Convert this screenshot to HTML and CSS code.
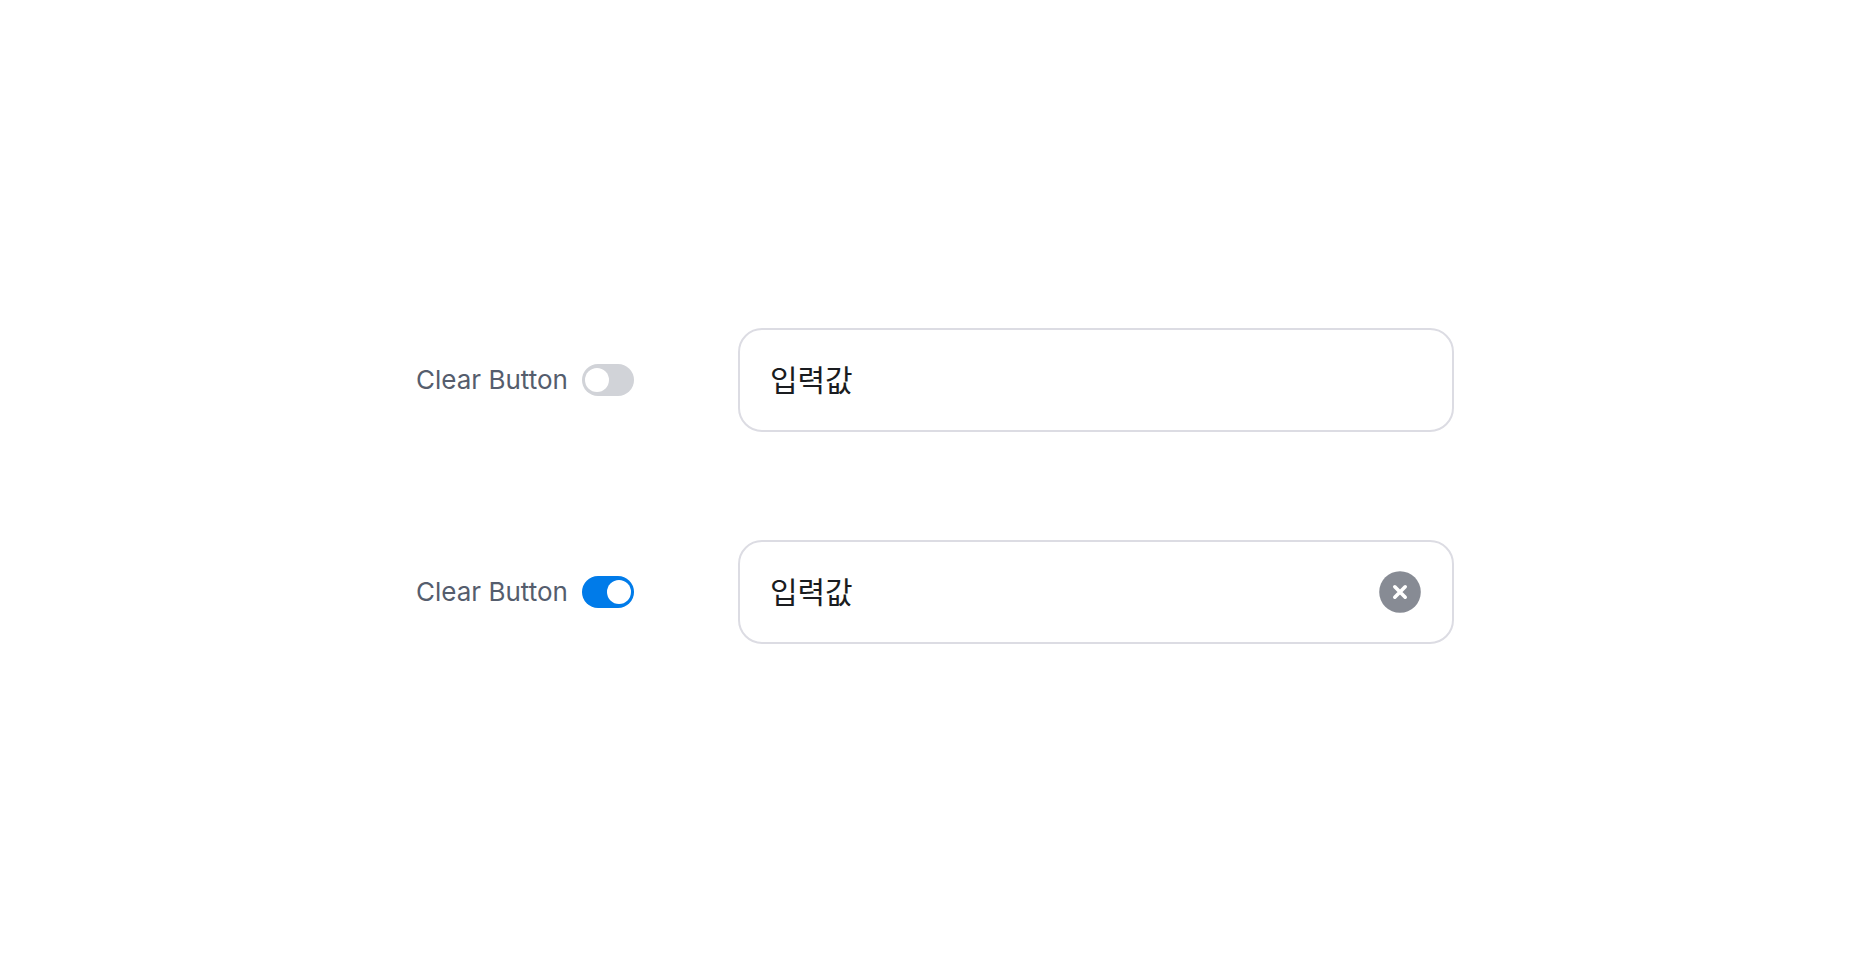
FILE: index.html
```html
<!DOCTYPE html>
<html lang="ko">
<head>
  <meta charset="UTF-8" />
  <meta name="viewport" content="width=device-width, initial-scale=1.0" />
  <title>Clear Button</title>
  <link rel="stylesheet" href="styles.css">
</head>
<body>
  <main class="demo">
    <div class="row">
      <label class="option">
        <span>Clear Button</span>
        <input type="checkbox" class="switch" />
      </label>
      <div class="field">
        <input type="text" value="입력값" aria-label="입력값 1" />
      </div>
    </div>

    <div class="row">
      <label class="option">
        <span>Clear Button</span>
        <input type="checkbox" class="switch" checked />
      </label>
      <div class="field">
        <input type="text" value="입력값" aria-label="입력값 2" />
        <button type="button" class="clear" aria-label="Clear">
          <svg viewBox="0 0 42 42" width="42" height="42">
            <circle cx="21" cy="21" r="20.8" fill="#878b94" />
            <path d="M15.8 15.8l10.4 10.4M26.2 15.8l-10.4 10.4" stroke="#fff" stroke-width="3.6" stroke-linecap="round" />
          </svg>
        </button>
      </div>
    </div>
  </main>
</body>
</html>
```

FILE: styles.css
```css
* {
  box-sizing: border-box;
}
body {
  margin: 0;
  min-height: 100vh;
  padding: 12px 18px 0 16px;
  display: flex;
  justify-content: center;
  align-items: center;
  background: #fff;
  font-family: Inter, "Noto Sans CJK KR", sans-serif;
}
.demo {
  width: 100%;
  max-width: 1038px;
  display: flex;
  flex-direction: column;
  gap: 108px;
}
.row {
  display: flex;
  align-items: center;
  justify-content: space-between;
}
.option {
  display: flex;
  align-items: center;
  gap: 14px;
  font-size: 26px;
  line-height: 32px;
  color: #555d6d;
  white-space: nowrap;
  cursor: pointer;
}
.switch {
  appearance: none;
  width: 52px;
  height: 32px;
  margin: 0;
  padding: 4px 3px;
  display: flex;
  border-radius: 16px;
  background: #d1d3d8;
  cursor: pointer;
}
.switch::before {
  content: "";
  width: 24px;
  height: 24px;
  border-radius: 50%;
  background: #fff;
}
.switch:checked {
  justify-content: flex-end;
  background: #007be9;
}
.field {
  flex: 1;
  min-width: 0;
  height: 104px;
  margin-left: 104px;
  padding: 0 31px 0 30px;
  display: flex;
  align-items: center;
  gap: 16px;
  border: 2px solid #dcdce3;
  border-radius: 24px;
}
.field input {
  flex: 1;
  min-width: 0;
  padding: 0;
  border: none;
  outline: none;
  background: none;
  font-family: inherit;
  font-size: 30px;
  line-height: 40px;
  color: #1a1c20;
}
.clear {
  padding: 0;
  border: none;
  background: none;
  cursor: pointer;
}
.clear svg {
  display: block;
}
```
